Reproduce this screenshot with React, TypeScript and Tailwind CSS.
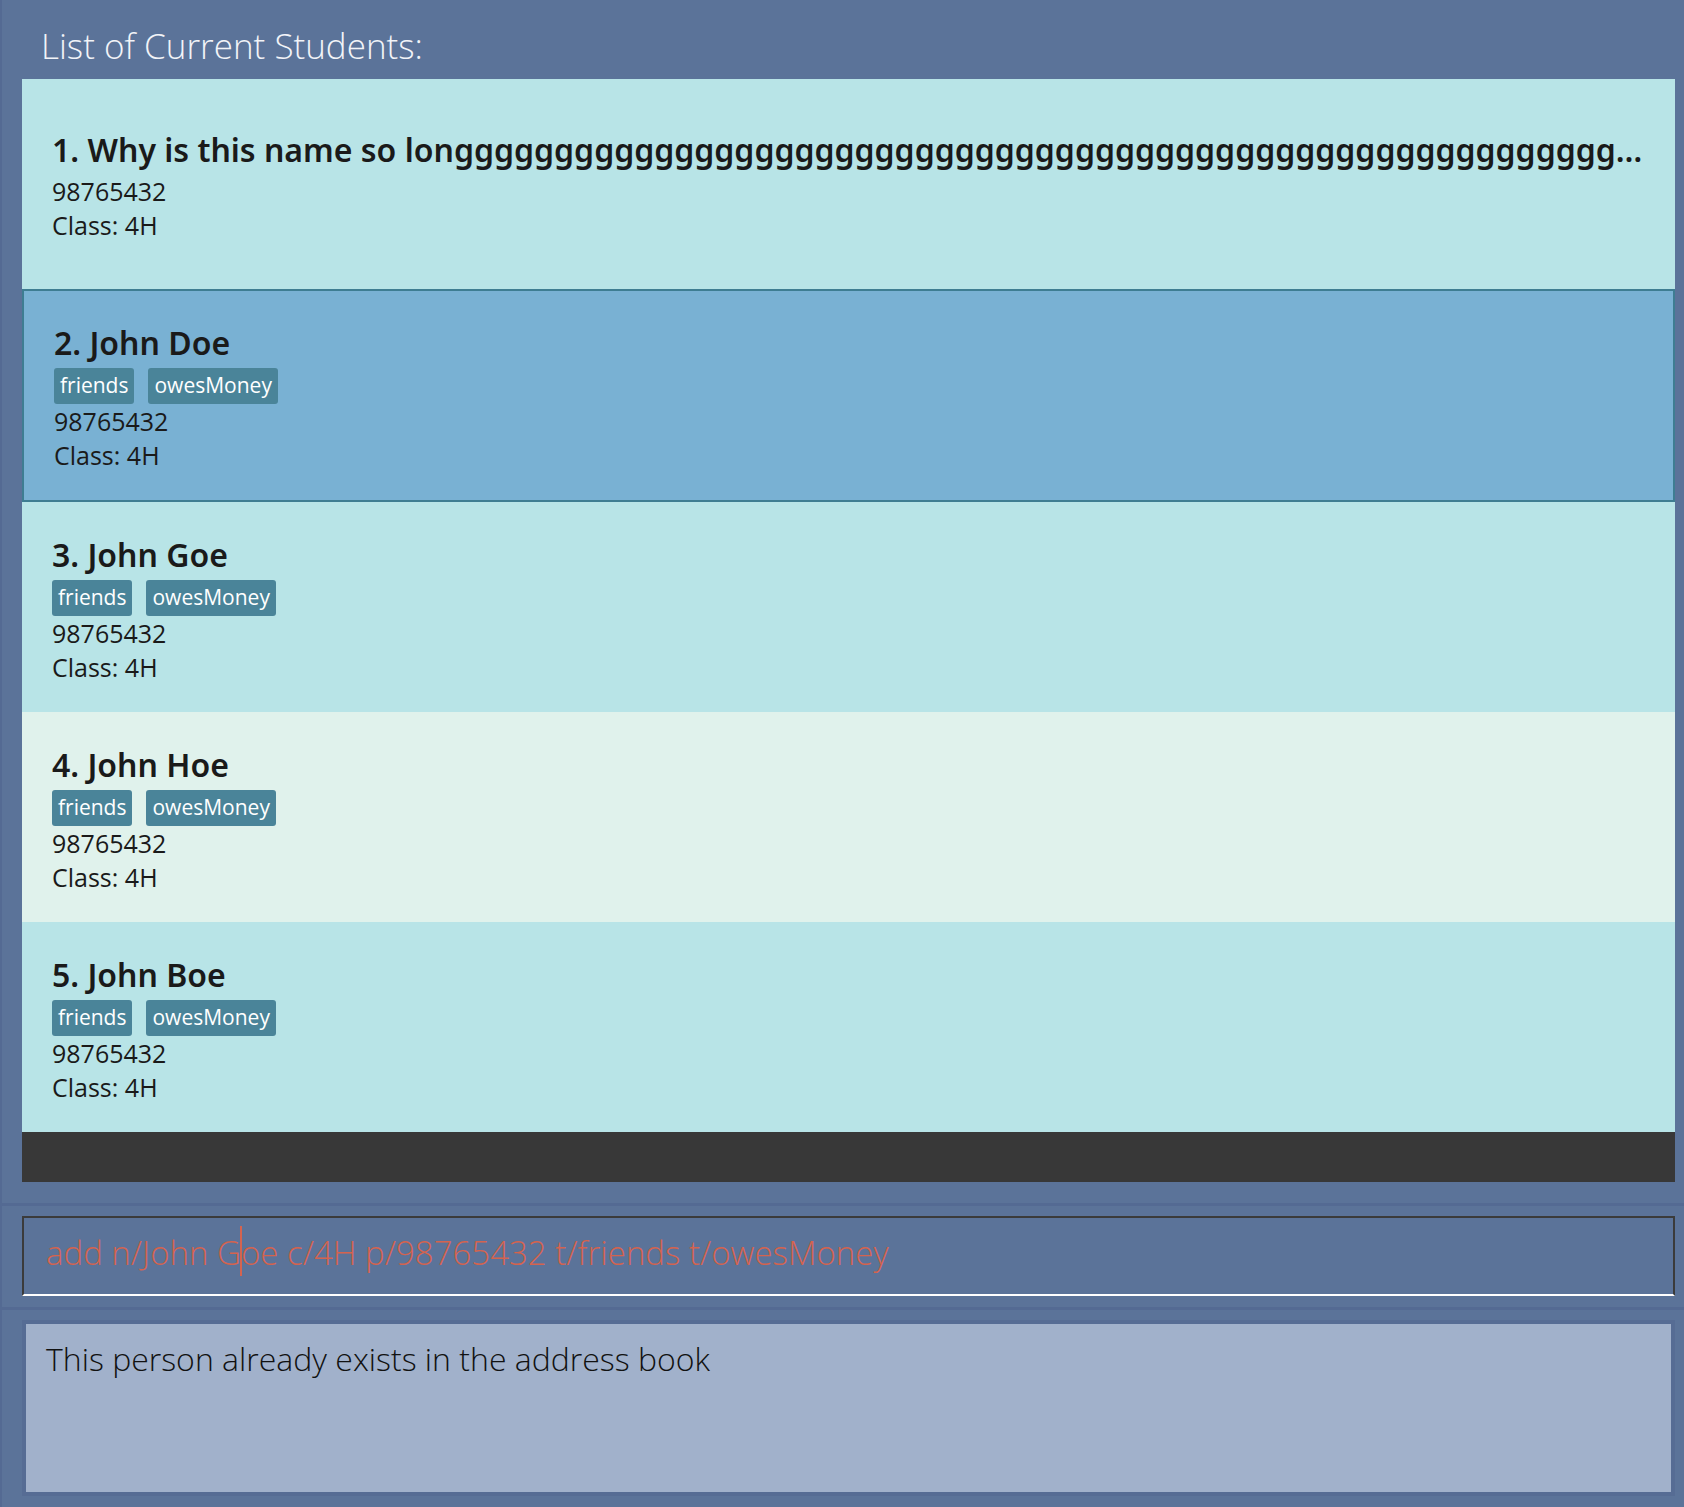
type Student = {
  name: string;
  tags: string[];
  phone: string;
  klass: string;
};

const students: Student[] = [
  {
    name: "Why is this name so long" + "g".repeat(80),
    tags: [],
    phone: "98765432",
    klass: "4H",
  },
  { name: "John Doe", tags: ["friends", "owesMoney"], phone: "98765432", klass: "4H" },
  { name: "John Goe", tags: ["friends", "owesMoney"], phone: "98765432", klass: "4H" },
  { name: "John Hoe", tags: ["friends", "owesMoney"], phone: "98765432", klass: "4H" },
  { name: "John Boe", tags: ["friends", "owesMoney"], phone: "98765432", klass: "4H" },
];

const SELECTED = 1;

function StudentCard({ s, index }: { s: Student; index: number }) {
  const selected = index === SELECTED;
  // even rows are the pale ones, the selected row gets a border
  const bg = selected
    ? "h-[213px] bg-[#79b1d3] border-2 border-[#3e7d92]"
    : index % 2 === 1
      ? "h-[210px] bg-[#e0f2ec]"
      : "h-[210px] bg-[#b8e4e7]";

  return (
    <div className={`flex flex-col justify-center px-[30px] text-[#1a1a1a] ${bg}`}>
      <div className="truncate font-['Noto_Sans',sans-serif] text-[32px] font-semibold leading-[48px]">
        {index + 1}. {s.name}
      </div>
      {s.tags.length > 0 && (
        <div className="mt-[1px] flex gap-[14px]">
          {s.tags.map((t) => (
            <span
              key={t}
              className="flex h-[36px] items-center rounded-[3px] bg-[#4a8499] px-[6px] text-[21px] text-white"
            >
              {t}
            </span>
          ))}
        </div>
      )}
      <div className="text-[25px] leading-[34px]">{s.phone}</div>
      <div className="text-[25px] leading-[34px]">Class: {s.klass}</div>
    </div>
  );
}

export default function App() {
  return (
    <div className="flex h-[1507px] w-[1684px] flex-col overflow-hidden border-l-2 border-[#546a93] bg-[#5b7399] font-['Open_Sans',sans-serif]">
      {/* Student list */}
      <section className="flex h-[1203px] flex-col pl-[20px] pr-[9px]">
        <h1 className="h-[79px] pl-[19px] pt-[22px] text-[35px] font-light leading-[48px] text-[#f2f4f8]">
          List of Current Students:
        </h1>
        <div className="flex flex-col">
          {students.map((s, i) => (
            <StudentCard key={i} s={s} index={i} />
          ))}
          <div className="h-[50px] bg-[#383838]" />
        </div>
      </section>

      <div className="h-[3px] bg-[#546a93]" />

      {/* Command box */}
      <section className="h-[101px] pl-[20px] pr-[9px] pt-[10px]">
        <div className="h-[80px] border-x-2 border-t-2 border-b-2 border-x-[#3b3b3b] border-t-[#3b3b3b] border-b-white pl-[22px] pt-[15px] text-[33px] font-light leading-[40px] text-[#d4634f]">
          add n/John{" "}
          <span className="relative">
            G
            <span className="absolute right-[-1px] top-[-4px] h-[50px] w-[2px] bg-[#d4634f]" />
          </span>
          oe c/4H p/98765432 t/friends t/owesMoney
        </div>
      </section>

      <div className="h-[3px] bg-[#546a93]" />

      {/* Result display */}
      <section className="flex-1 pl-[20px] pr-[9px] pt-[10px]">
        <div className="h-[176px] border-4 border-[#566c94] bg-[#a1b1cb] pl-[20px] pt-[13px] text-[32px] font-light leading-[44px] text-[#111]">
          This person already exists in the address book
        </div>
      </section>
    </div>
  );
}
